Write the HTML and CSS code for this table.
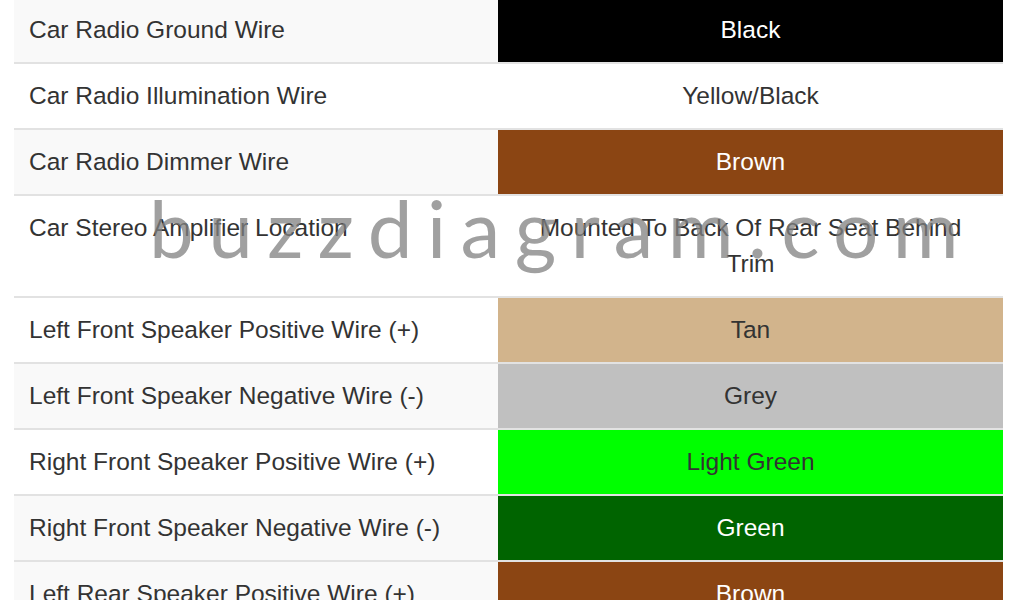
FILE: index.html
```html
<!DOCTYPE html>
<html lang="en">
<head>
    <meta charset="UTF-8">
    <meta name="viewport" content="width=device-width, initial-scale=1.0">
    <title>Car Stereo Wiring Colors</title>
    <link rel="stylesheet" href="styles.css">
</head>
<body>
    <div class="wrap">
        <table class="wires">
            <tr class="striped">
                <td>Car Radio Ground Wire</td>
                <td class="c-black">Black</td>
            </tr>
            <tr>
                <td>Car Radio Illumination Wire</td>
                <td>Yellow/Black</td>
            </tr>
            <tr class="striped">
                <td>Car Radio Dimmer Wire</td>
                <td class="c-brown">Brown</td>
            </tr>
            <tr>
                <td>Car Stereo Amplifier Location</td>
                <td>Mounted To Back Of Rear Seat Behind Trim</td>
            </tr>
            <tr>
                <td>Left Front Speaker Positive Wire (+)</td>
                <td class="c-tan">Tan</td>
            </tr>
            <tr class="striped">
                <td>Left Front Speaker Negative Wire (-)</td>
                <td class="c-grey">Grey</td>
            </tr>
            <tr>
                <td>Right Front Speaker Positive Wire (+)</td>
                <td class="c-lime">Light Green</td>
            </tr>
            <tr class="striped">
                <td>Right Front Speaker Negative Wire (-)</td>
                <td class="c-green">Green</td>
            </tr>
            <tr class="striped">
                <td>Left Rear Speaker Positive Wire (+)</td>
                <td class="c-brown">Brown</td>
            </tr>
            <tr>
                <td>Left Rear Speaker Negative Wire (-)</td>
                <td class="c-brown">Brown/Black</td>
            </tr>
        </table>

        <!-- site watermark over the table -->
        <div class="watermark">buzzdiagram.com</div>
    </div>
</body>
</html>
```

FILE: styles.css
```css
body {
    margin: 0;
    background: #fff;
    font-family: "Liberation Sans", Arial, sans-serif;
    color: #333;
    overflow: hidden;
}

.wrap {
    position: relative;
    margin: -4px 21px 0 14px;
}

.wires {
    width: 989px;
    border-collapse: collapse;
    font-size: 24.5px;
    line-height: 36px;
}

.wires td {
    padding: 14px 15px;
    border-top: 2px solid #e2e2e2;
    vertical-align: top;
}

.wires td:first-child {
    width: 454px;
}

.wires td + td {
    text-align: center;
}

.striped td {
    background: #f9f9f9;
}

.wires .c-black { background: #000; color: #fff; }
.wires .c-brown { background: #8b4513; color: #fff; }
.wires .c-tan { background: #d2b48c; }
.wires .c-grey { background: #c0c0c0; }
.wires .c-lime { background: #00ff00; }
.wires .c-green { background: #006400; color: #fff; }

.watermark {
    position: absolute;
    left: 135px;
    top: 181px;
    font-family: Lato, "DejaVu Sans", sans-serif;
    font-size: 80px;
    line-height: 100px;
    letter-spacing: 14.4px;
    color: rgba(128, 128, 128, 0.75);
    pointer-events: none;
    white-space: nowrap;
}
```
